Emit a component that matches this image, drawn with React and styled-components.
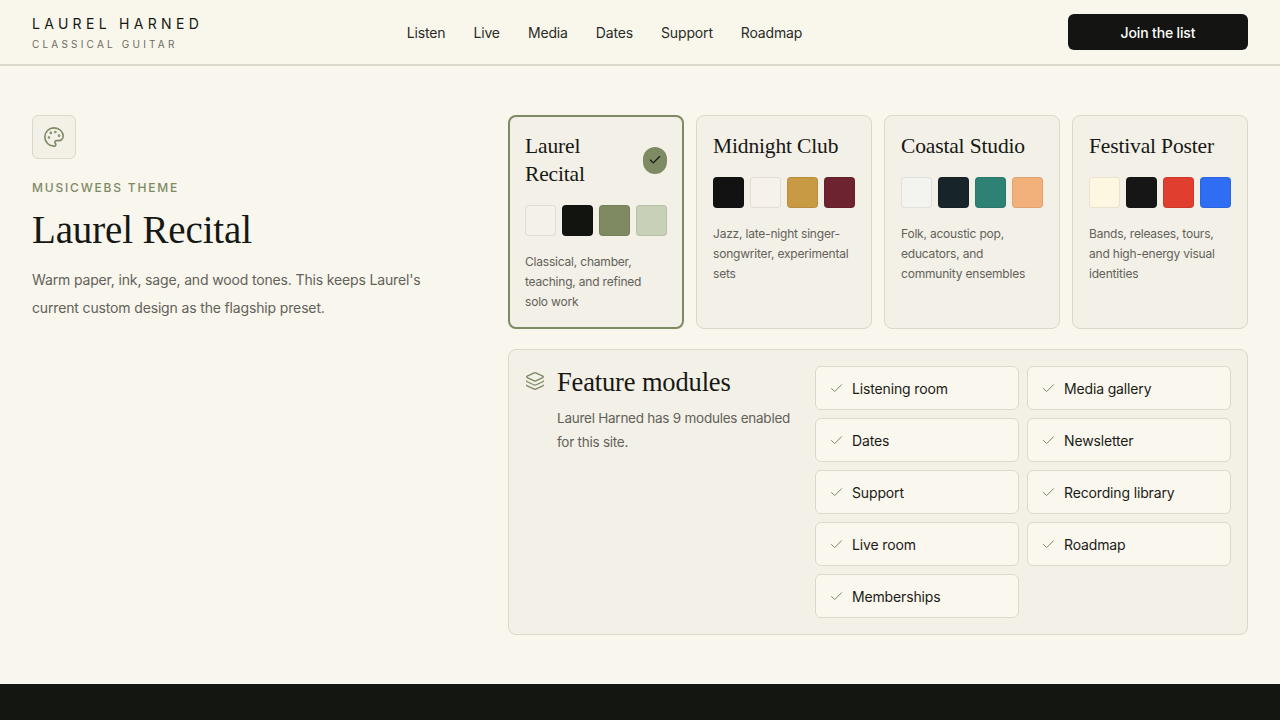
import React from "react";
import styled, { createGlobalStyle } from "styled-components";
import { Palette, Layers, Check } from "lucide-react";

const G = createGlobalStyle`
  body{margin:0;background:#f9f6ee;font-family:Inter,"Liberation Sans",sans-serif;color:#161814;letter-spacing:-0.15px;}
`;
const serif = `"Liberation Serif",Georgia,serif`;
const Header = styled.header`height:64px;border-bottom:2px solid #dcd8cc;background:#f9f7ec;display:flex;align-items:center;justify-content:space-between;padding:0 32px;`;
const Brand = styled.div`display:flex;flex-direction:column;gap:6px;width:180px;`;
const BrandName = styled.div`font-size:14px;letter-spacing:4.3px;`;
const BrandSub = styled.div`font-size:10px;letter-spacing:3.2px;color:#6b6b62;`;
const Nav = styled.nav`display:flex;gap:28px;font-size:14px;color:#2a2b27;`;
const Join = styled.button`background:#141512;color:#fff;border:0;border-radius:6px;height:36px;padding:0 17px;font:500 14px Inter,sans-serif;letter-spacing:-0.15px;width:180px;flex:none;margin-left:71px;`;
const Main = styled.main`display:flex;padding:49px 32px 0;gap:48px;height:618px;box-sizing:border-box;`;
const Left = styled.div`width:428px;`;
const IconBox = styled.div`width:42px;height:42px;border:1px solid #dcd8cc;border-radius:6px;background:#f3f0e7;display:flex;align-items:center;justify-content:center;color:#7d8a63;`;
const Eyebrow = styled.div`margin-top:21px;font-size:12px;letter-spacing:1.8px;color:#7d8a63;font-weight:500;`;
const H1 = styled.h1`font:400 39px ${serif};margin:12px 0 14px;`;
const P = styled.p`font-size:14px;line-height:28px;color:#62625a;margin:0;`;
const Right = styled.div`width:740px;display:flex;flex-direction:column;gap:20px;`;
const Cards = styled.div`display:grid;grid-template-columns:repeat(4,1fr);gap:12px;`;
const Card = styled.div`height:214px;box-sizing:border-box;border:${p=>p.$sel?"2px solid #7d8a63":"1px solid #dcd8cc"};border-radius:8px;background:#f3f0e7;padding:${p=>p.$sel?"15px":"16px"};`;
const CardTop = styled.div`display:flex;justify-content:space-between;align-items:center;`;
const CardTitle = styled.div`font:400 21.5px/28px ${serif};`;
const Tick = styled.div`width:24px;height:27px;border-radius:12px;background:#7d8a63;display:flex;align-items:center;justify-content:center;color:#141512;`;
const Swatches = styled.div`display:grid;grid-template-columns:repeat(4,31px);justify-content:space-between;margin:17px 0 16px;`;
const Sw = styled.div`height:31px;border-radius:4px;background:${p=>p.c};border:1px solid rgba(0,0,0,.08);box-sizing:border-box;`;
const Desc = styled.div`font-size:12px;line-height:20px;color:#62625a;letter-spacing:-0.2px;`;
const Panel = styled.div`border:1px solid #dcd8cc;border-radius:8px;background:#f3f0e7;padding:16px;display:flex;gap:18px;`;
const PanelInfo = styled.div`flex:1;display:flex;gap:12px;color:#7d8a63;`;
const H2 = styled.div`font:400 26.5px/32px ${serif};color:#161814;`;
const PanelP = styled.div`font-size:13.5px;line-height:24px;color:#62625a;margin-top:8px;letter-spacing:-0.25px;`;
const Mods = styled.div`display:grid;grid-template-columns:204px 204px;gap:8px;`;
const Mod = styled.div`height:44px;box-sizing:border-box;border:1px solid #dcd8cc;border-radius:6px;background:#faf7ee;display:flex;align-items:center;gap:8px;padding:0 13px;font-size:14px;color:#7d8a63;& span{color:#1a1b17;}`;
const Footer = styled.div`height:40px;background:#131611;`;

const cards=[
["Laurel Recital",["#f4f1eb","#121410","#7f8a63","#c8d0b8"],"Classical, chamber, teaching, and refined solo work",true],
["Midnight Club",["#121212","#f6f1e9","#c89a44","#6e2330"],"Jazz, late-night singer-songwriter, experimental sets"],
["Coastal Studio",["#f3f3ef","#17242a","#2e8275","#f2b07a"],"Folk, acoustic pop, educators, and community ensembles"],
["Festival Poster",["#fdf6e1","#161616","#e03e2f","#2f6df2"],"Bands, releases, tours, and high-energy visual identities"]];
const mods=["Listening room","Media gallery","Dates","Newsletter","Support","Recording library","Live room","Roadmap","Memberships"];

export default function App(){return(<>
<G/>
<Header><Brand><BrandName>LAUREL HARNED</BrandName><BrandSub>CLASSICAL GUITAR</BrandSub></Brand>
<Nav>{["Listen","Live","Media","Dates","Support","Roadmap"].map(n=><span key={n}>{n}</span>)}</Nav>
<Join>Join the list</Join></Header>
<Main><Left><IconBox><Palette size={22} strokeWidth={1.8}/></IconBox><Eyebrow>MUSICWEBS THEME</Eyebrow><H1>Laurel Recital</H1>
<P>Warm paper, ink, sage, and wood tones. This keeps Laurel's current custom design as the flagship preset.</P></Left>
<Right><Cards>{cards.map(([t,cs,d,s])=><Card key={t} $sel={s}><CardTop><CardTitle>{t.split(" ").map((w,i)=>s?<div key={i}>{w}</div>:w+" ")}</CardTitle>{s&&<Tick><Check size={14} strokeWidth={2}/></Tick>}</CardTop>
<Swatches>{cs.map(c=><Sw key={c} c={c}/>)}</Swatches><Desc>{d}</Desc></Card>)}</Cards>
<Panel><PanelInfo><Layers size={20} strokeWidth={1.6} style={{marginTop:5,flex:"none"}}/><div><H2>Feature modules</H2><PanelP>Laurel Harned has 9 modules enabled for this site.</PanelP></div></PanelInfo>
<Mods>{mods.map(m=><Mod key={m}><Check size={15} strokeWidth={1.6}/><span>{m}</span></Mod>)}</Mods></Panel></Right></Main>
<Footer/></>);}
